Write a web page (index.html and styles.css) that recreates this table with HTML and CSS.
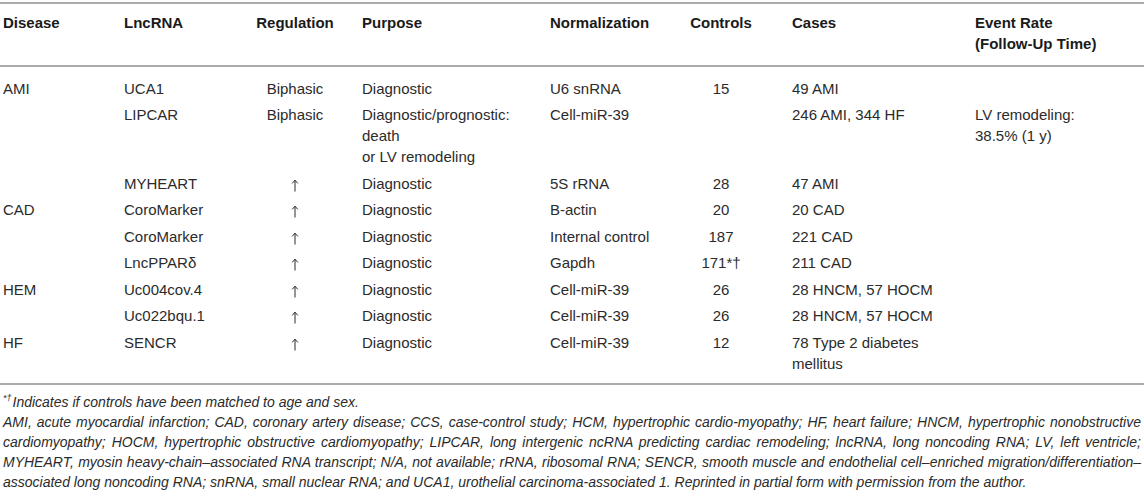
FILE: index.html
```html
<!DOCTYPE html>
<html lang="en">
<head>
    <meta charset="UTF-8">
    <meta name="viewport" content="width=device-width, initial-scale=1.0">
    <title>Circulating lncRNAs in cardiovascular disease</title>
    <link rel="stylesheet" href="styles.css">
</head>
<body>
    <div class="table-wrap">
        <table class="data-table">
            <colgroup>
                <col class="col-disease">
                <col class="col-lnc">
                <col class="col-reg">
                <col class="col-purpose">
                <col class="col-norm">
                <col class="col-controls">
                <col class="col-cases">
                <col class="col-event">
            </colgroup>
            <thead>
                <tr>
                    <th class="first">Disease</th>
                    <th>LncRNA</th>
                    <th class="center">Regulation</th>
                    <th class="purpose">Purpose</th>
                    <th>Normalization</th>
                    <th class="center">Controls</th>
                    <th class="cases">Cases</th>
                    <th>Event Rate<br>(Follow-Up Time)</th>
                </tr>
            </thead>
            <tbody>
                <tr>
                    <td class="first">AMI</td>
                    <td>UCA1</td>
                    <td class="center">Biphasic</td>
                    <td class="purpose">Diagnostic</td>
                    <td>U6 snRNA</td>
                    <td class="center">15</td>
                    <td class="cases">49 AMI</td>
                    <td></td>
                </tr>
                <tr>
                    <td class="first"></td>
                    <td>LIPCAR</td>
                    <td class="center">Biphasic</td>
                    <td class="purpose">Diagnostic/prognostic:<br>death<br>or LV remodeling</td>
                    <td>Cell-miR-39</td>
                    <td class="center"></td>
                    <td class="cases">246 AMI, 344 HF</td>
                    <td>LV remodeling:<br>38.5% (1 y)</td>
                </tr>
                <tr>
                    <td class="first"></td>
                    <td>MYHEART</td>
                    <td class="center"><svg class="arrow" viewBox="0 0 8 13" aria-label="up"><path d="M4 12.5V1.2M1.2 4.4L4 1.2L6.8 4.4"/></svg></td>
                    <td class="purpose">Diagnostic</td>
                    <td>5S rRNA</td>
                    <td class="center">28</td>
                    <td class="cases">47 AMI</td>
                    <td></td>
                </tr>
                <tr>
                    <td class="first">CAD</td>
                    <td>CoroMarker</td>
                    <td class="center"><svg class="arrow" viewBox="0 0 8 13" aria-label="up"><path d="M4 12.5V1.2M1.2 4.4L4 1.2L6.8 4.4"/></svg></td>
                    <td class="purpose">Diagnostic</td>
                    <td>B-actin</td>
                    <td class="center">20</td>
                    <td class="cases">20 CAD</td>
                    <td></td>
                </tr>
                <tr>
                    <td class="first"></td>
                    <td>CoroMarker</td>
                    <td class="center"><svg class="arrow" viewBox="0 0 8 13" aria-label="up"><path d="M4 12.5V1.2M1.2 4.4L4 1.2L6.8 4.4"/></svg></td>
                    <td class="purpose">Diagnostic</td>
                    <td>Internal control</td>
                    <td class="center">187</td>
                    <td class="cases">221 CAD</td>
                    <td></td>
                </tr>
                <tr>
                    <td class="first"></td>
                    <td>LncPPAR&delta;</td>
                    <td class="center"><svg class="arrow" viewBox="0 0 8 13" aria-label="up"><path d="M4 12.5V1.2M1.2 4.4L4 1.2L6.8 4.4"/></svg></td>
                    <td class="purpose">Diagnostic</td>
                    <td>Gapdh</td>
                    <td class="center">171*&dagger;</td>
                    <td class="cases">211 CAD</td>
                    <td></td>
                </tr>
                <tr>
                    <td class="first">HEM</td>
                    <td>Uc004cov.4</td>
                    <td class="center"><svg class="arrow" viewBox="0 0 8 13" aria-label="up"><path d="M4 12.5V1.2M1.2 4.4L4 1.2L6.8 4.4"/></svg></td>
                    <td class="purpose">Diagnostic</td>
                    <td>Cell-miR-39</td>
                    <td class="center">26</td>
                    <td class="cases">28 HNCM, 57 HOCM</td>
                    <td></td>
                </tr>
                <tr>
                    <td class="first"></td>
                    <td>Uc022bqu.1</td>
                    <td class="center"><svg class="arrow" viewBox="0 0 8 13" aria-label="up"><path d="M4 12.5V1.2M1.2 4.4L4 1.2L6.8 4.4"/></svg></td>
                    <td class="purpose">Diagnostic</td>
                    <td>Cell-miR-39</td>
                    <td class="center">26</td>
                    <td class="cases">28 HNCM, 57 HOCM</td>
                    <td></td>
                </tr>
                <tr>
                    <td class="first">HF</td>
                    <td>SENCR</td>
                    <td class="center"><svg class="arrow" viewBox="0 0 8 13" aria-label="up"><path d="M4 12.5V1.2M1.2 4.4L4 1.2L6.8 4.4"/></svg></td>
                    <td class="purpose">Diagnostic</td>
                    <td>Cell-miR-39</td>
                    <td class="center">12</td>
                    <td class="cases">78 Type 2 diabetes<br>mellitus</td>
                    <td></td>
                </tr>
            </tbody>
        </table>

        <div class="footnotes">
            <p><sup>*&dagger;</sup>Indicates if controls have been matched to age and sex.</p>
            <p>AMI, acute myocardial infarction; CAD, coronary artery disease; CCS, case-control study; HCM, hypertrophic cardio-myopathy; HF, heart failure; HNCM, hypertrophic nonobstructive cardiomyopathy; HOCM, hypertrophic obstructive cardiomyopathy; LIPCAR, long intergenic ncRNA predicting cardiac remodeling; lncRNA, long noncoding RNA; LV, left ventricle; MYHEART, myosin heavy-chain&ndash;associated RNA transcript; N/A, not available; rRNA, ribosomal RNA; SENCR, smooth muscle and endothelial cell&ndash;enriched migration/differentiation&ndash;associated long noncoding RNA; snRNA, small nuclear RNA; and UCA1, urothelial carcinoma-associated 1. Reprinted in partial form with permission from the author.</p>
        </div>
    </div>
</body>
</html>
```

FILE: styles.css
```css
:root {
    --text: #2b2b2b;
    --head: #1a1a1a;
    --rule: #ababab;
}

* {
    box-sizing: border-box;
    margin: 0;
    padding: 0;
}

body {
    background: #ffffff;
    color: var(--text);
    font-family: "Liberation Sans", Arial, Helvetica, sans-serif;
    font-size: 15px;
    line-height: 21px;
}

.table-wrap {
    width: 1144px;
    padding-top: 2px;
}

.data-table {
    width: 100%;
    border-collapse: collapse;
    table-layout: fixed;
    border-top: 2px solid var(--rule);
    border-bottom: 2px solid var(--rule);
}

.col-disease { width: 124px; }
.col-lnc { width: 116px; }
.col-reg { width: 110px; }
.col-purpose { width: 200px; }
.col-norm { width: 130px; }
.col-controls { width: 82px; }
.col-cases { width: 213px; }
.col-event { width: 169px; }

th,
td {
    text-align: left;
    vertical-align: top;
    padding: 3px 0 2.5px 0;
    white-space: nowrap;
}

th {
    color: var(--head);
    font-weight: 700;
    padding-top: 8px;
    padding-bottom: 11px;
    border-bottom: 2px solid var(--rule);
}

.first {
    padding-left: 3px;
}

.center {
    text-align: center;
}

.purpose {
    padding-left: 12px;
}

.cases {
    padding-left: 30px;
}

.arrow {
    width: 8px;
    height: 13px;
    vertical-align: -3px;
    fill: none;
    stroke: var(--text);
    stroke-width: 1;
}

tbody tr:first-child td {
    padding-top: 10.5px;
}

tbody tr:last-child td {
    padding-bottom: 9.5px;
}

.footnotes {
    margin-top: 7px;
    padding: 0 3px;
    font-style: italic;
    font-size: 14px;
    line-height: 20px;
    text-align: justify;
    color: var(--text);
}

.footnotes sup {
    font-size: 9px;
    line-height: 0;
    margin-right: 1px;
}
```
